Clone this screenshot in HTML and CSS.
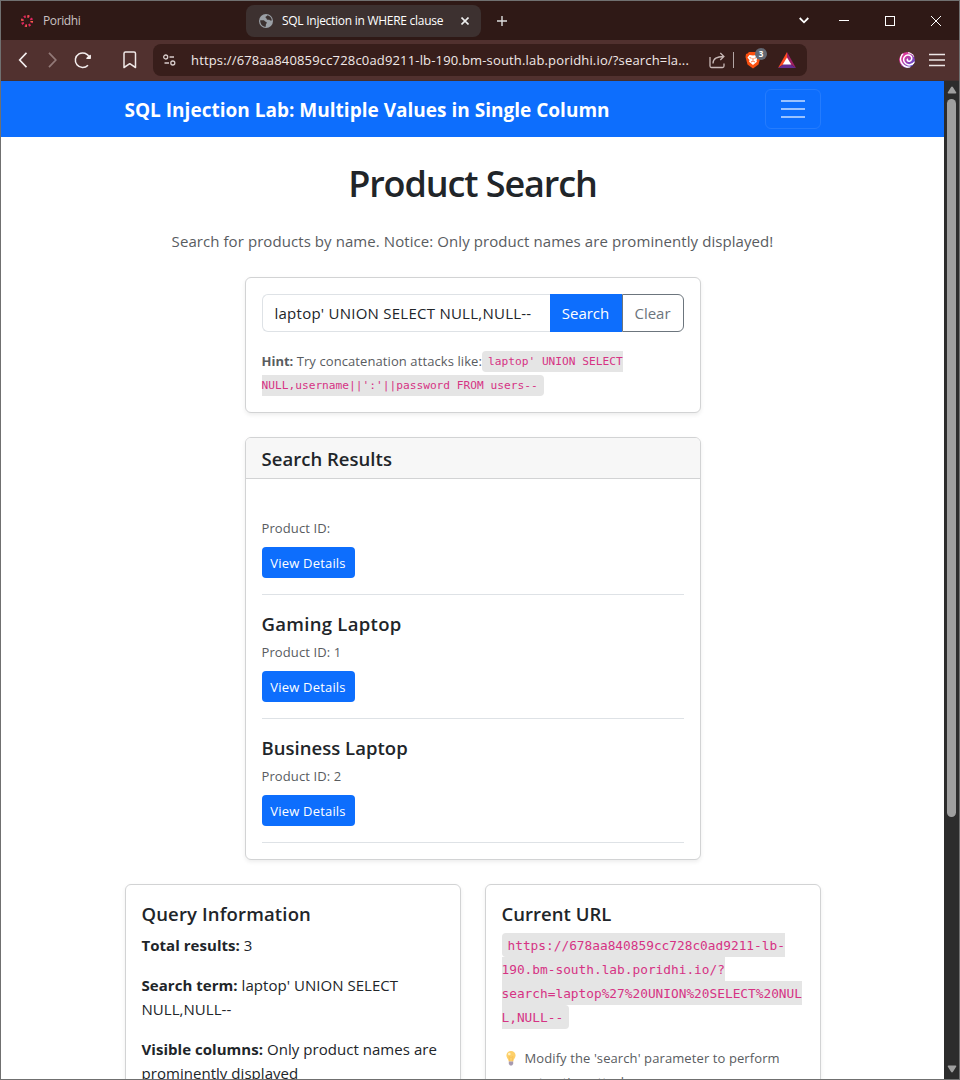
FILE: index.html
```html
<!DOCTYPE html>
<html lang="en">
<head>
<meta charset="utf-8">
<title>SQL Injection in WHERE clause</title>
<link rel="stylesheet" href="styles.css">
</head>
<body>
<div class="window">
  <div class="tabs">
    <div class="tab idle">
      <svg width="14" height="14" viewBox="0 0 14 14" fill="none" stroke-width="2.5"><circle cx="7" cy="7" r="4.800" stroke="#e0265f" stroke-dasharray="1.900 1.870"/><circle cx="7" cy="7" r="4.800" stroke="#f0703f" stroke-dasharray="1 6.540"/></svg>
      <span class="t-idle">Poridhi</span>
    </div>
    <div class="tab active">
      <svg width="14" height="14" viewBox="0 0 14 14"><circle cx="7" cy="7" r="7" fill="#9ba0a6"/><path d="M1.2 6.2h3.4c1 0 1.3 1.2 2.2 1.5s1.2.8.8 1.6-.8 1.2-.8 2.3v1.2C3.500 12.600 1 10 1.200 6.200zM8.500 1.300c-.2 1-1.700.8-2 1.700s1 .8 1 1.600 1 1.400 2 1.200 1.200.6 2 .8l1.400-.1c-.2-2.600-2-4.600-4.400-5.200z" fill="#3c3231"/></svg>
      <span class="t-active">SQL Injection in WHERE clause</span>
      <svg class="close" width="8" height="8" viewBox="0 0 8 8" stroke="#eee" stroke-width="1.6"><path d="M.5.5l7 7M7.500.5l-7 7"/></svg>
    </div>
    <svg class="plus" width="10" height="10" viewBox="0 0 10 10" stroke="#ddd" stroke-width="1.400"><path d="M5 0v10M0 5h10"/></svg>
    <div class="controls">
      <svg class="chevron" width="10" height="7" viewBox="0 0 10 7" fill="none" stroke="#fff" stroke-width="1.800"><path d="M.7 1L5 5.300 9.300 1"/></svg>
      <svg width="10" height="10" viewBox="0 0 10 10" stroke="#fff"><path d="M0 4.500h10"/></svg>
      <svg width="10" height="10" viewBox="0 0 10 10" fill="none" stroke="#fff"><rect x=".5" y=".5" width="9" height="9"/></svg>
      <svg width="10" height="10" viewBox="0 0 10 10" stroke="#fff"><path d="M0 0l10 10M10 0L0 10"/></svg>
    </div>
  </div>
  <div class="toolbar">
    <svg class="back" width="9" height="16" viewBox="0 0 9 16" fill="none" stroke="#f4eeee" stroke-width="1.700"><path d="M8.500 .8L1.700 8 8.500 15.200"/></svg>
    <svg class="fwd" width="9" height="16" viewBox="0 0 9 16" fill="none" stroke="#937a78" stroke-width="1.700"><path d="M1 .8L7.800 8 1 15.200"/></svg>
    <svg class="reload" width="18" height="18" viewBox="0 0 18 18" fill="none" stroke="#f4eeee" stroke-width="1.500"><path d="M14 14.200A7.300 7.300 0 1 1 15.400 6.500"/><path d="M13 7.300h3.200V4.500z" fill="#f4eeee" stroke-linejoin="round"/></svg>
    <svg class="mark" width="14" height="18" viewBox="0 0 14 18" fill="none" stroke="#f0e8e7" stroke-width="1.500" stroke-linejoin="round"><path d="M1 2.500Q1 1 2.500 1h8.500q1.500 0 1.500 1.500v14L6.750 12.700 1 16.500z"/></svg>
    <div class="address">
      <svg width="13" height="12" viewBox="0 0 13 12" fill="none" stroke="#d8cccb" stroke-width="1.300"><circle cx="2.700" cy="3" r="2"/><path d="M6.500 3H11M1.500 9H6"/><circle cx="9.800" cy="9" r="2"/></svg>
      <span class="url">https://678aa840859cc728c0ad9211-lb-190.bm-south.lab.poridhi.io/?search=la...</span>
      <svg class="share" width="17" height="17" viewBox="0 0 17 17" fill="none" stroke="#c9b9b7" stroke-width="1.300"><path d="M1 5v9q0 1.500 1.500 1.500h11q1.500 0 1.500-1.500v-2.500M4 11.500C4 6.500 8 4.500 14.500 4.500M11.300 1l3.600 3.500-3.600 3.500"/></svg>
      <i class="rule"></i>
      <div class="brave">
        <svg width="16" height="18" viewBox="0 0 16 18"><path d="M4 1h8l1.500 1.500L15 3l.5 3-2 7.500L8 17.500 2.500 13.500.5 6 1 3l1.500-.5z" fill="#fb5010"/><path d="M4.500 4L8 4.600 11.500 4 13.500 6.500 11.500 9l.4 1.800L8 14 4.100 10.800 4.500 9 2.500 6.500z" fill="#fff"/><path d="M4.500 6.500l2 .8M11.500 6.500l-2 .8M8 7v2.500M6 11l2-1 2 1" stroke="#fb5010" stroke-width=".8" fill="none"/></svg>
        <b class="count">3</b>
      </div>
      <svg class="bat" width="18" height="16" viewBox="0 0 18 16"><path d="M9 0L0 16l9-6z" fill="#ff4a22"/><path d="M9 0l9 16-9-6z" fill="#9e1f63"/><path d="M0 16h18l-9-6z" fill="#662d91"/><path d="M9 5.500l4.300 7H4.700z" fill="#fff"/></svg>
    </div>
    <svg class="swirl" width="16" height="16" viewBox="0 0 16 16" fill="none"><defs><linearGradient id="g" x1="0" y1="0" x2="1" y2="1"><stop offset=".3" stop-color="#d8389a"/><stop offset="1" stop-color="#3a50e0"/></linearGradient><clipPath id="c"><circle cx="8" cy="8" r="8"/></clipPath></defs><g clip-path="url(#c)"><circle cx="8" cy="8" r="8" fill="url(#g)"/><path d="M9 6.800C7.500 7.600 8.500 9.600 10.500 9.200S13.500 6 12 4.300 7 2.500 5.300 5.200s.2 7 3.700 7.600 5.500-1 7-3M4 1.500C1.500 4 .6 8 3 11.500s6 4 8.500 3.700M9 .5c3 0 5 1.500 6.500 4" stroke="#fff" stroke-width="1.500"/></g></svg>
    <svg class="menu" width="16" height="14" viewBox="0 0 16 14" stroke="#eee7e6" stroke-width="1.500"><path d="M0 1.500h16M0 7h16M0 12.500h16"/></svg>
  </div>
  <div class="view">
    <main class="page">
      <nav class="navbar">
        <span class="brand">SQL Injection Lab: Multiple Values in Single Column</span>
        <span class="toggler"><svg width="24" height="18" viewBox="0 0 24 18" stroke="#9ac2ff" stroke-width="2"><path d="M0 1h24M0 9h24M0 17h24"/></svg></span>
      </nav>
      <h1 class="title">Product Search</h1>
      <p class="lead">Search for products by name. Notice: Only product names are prominently displayed!</p>
      <section class="card search">
        <div class="group">
          <span class="field">laptop' UNION SELECT NULL,NULL--</span>
          <span class="go">Search</span>
          <span class="clear">Clear</span>
        </div>
        <p class="hint"><b>Hint:</b> <span class="try">Try concatenation attacks like:</span><code>laptop' UNION SELECT<br>NULL,username||':'||password FROM users--</code></p>
      </section>
      <section class="card results">
        <header class="head"><h2 class="h5">Search Results</h2></header>
        <div class="body">
          <article class="item"><p class="pid">Product ID:</p><span class="btn">View Details</span></article>
          <article class="item"><h3 class="h5 h-gaming">Gaming Laptop</h3><p class="pid">Product ID: 1</p><span class="btn">View Details</span></article>
          <article class="item"><h3 class="h5">Business Laptop</h3><p class="pid">Product ID: 2</p><span class="btn">View Details</span></article>
        </div>
      </section>
      <div class="columns">
        <section class="card info">
          <h2 class="h5 h-query">Query Information</h2>
          <p><b>Total results:</b> 3</p>
          <p><b>Search term:</b> laptop' UNION SELECT<br>NULL,NULL--</p>
          <p><b>Visible columns:</b> Only product names are<br>prominently displayed</p>
        </section>
        <section class="card info">
          <h2 class="h5">Current URL</h2>
          <p class="long"><code>https://678aa840859cc728c0ad9211-lb-<br>190.bm-south.lab.poridhi.io/?<br>search=laptop%27%20UNION%20SELECT%20NUL<br>L,NULL--</code></p>
          <p class="tip"><svg width="10" height="15" viewBox="0 0 10 15"><path d="M5 0a4.600 4.600 0 0 1 4.600 4.600C9.600 7 7.500 8 7.300 10.500H2.700C2.500 8 .4 7 .4 4.600A4.600 4.600 0 0 1 5 0z" fill="#fdd06a"/><path d="M3.800 10.500L3 5.500l2 1 2-1-.8 5" fill="none" stroke="#f8bd55" stroke-width=".7"/><circle cx="3.300" cy="3" r="1.300" fill="#fff2c4"/><path d="M2.800 10.500h4.400v2.500L6 14.500H4L2.800 13z" fill="#a79ab0"/></svg><span>Modify the 'search' parameter to perform<br>extraction attacks.</span></p>
        </section>
      </div>
    </main>
    <div class="scroll">
      <svg width="10" height="8" viewBox="0 0 10 8"><path d="M5 .5Q5.500.5 6 1.300L9.300 6.500Q9.500 7.500 8.500 7.500h-7Q.5 7.500.7 6.500L4 1.300Q4.500.5 5 .5z" fill="#9f9f9f"/></svg>
      <i class="thumb"></i>
      <svg class="down" width="10" height="8" viewBox="0 0 10 8"><path d="M5 7.500Q5.500 7.500 6 6.700L9.300 1.500Q9.500.5 8.500.5h-7Q.5.5.7 1.500L4 6.700Q4.500 7.500 5 7.500z" fill="#9f9f9f"/></svg>
    </div>
  </div>
</div>
</body>
</html>
```
FILE: styles.css
```css
* { box-sizing: border-box; }
body { margin: 0; font: 15px/24px "Open Sans", "Noto Sans", sans-serif; color: #212529; }
h1, h2, h3, p { margin: 0; }
svg { display: block; flex: none; }
.window { width: 960px; height: 1080px; border: 1px solid #707070; display: flex; flex-direction: column; overflow: hidden; white-space: nowrap; background: #fff; }

.tabs { height: 39px; flex: none; display: flex; align-items: center; background: #2f1916; color: #fff; font-size: 12px; line-height: 16px; }
.tab { display: flex; align-items: center; }
.idle { width: 245px; padding-left: 19px; gap: 9px; color: #cbc3c2; }
.t-idle { letter-spacing: -.4px; }
.active { width: 235px; height: 32px; padding-left: 13px; gap: 9px; border-radius: 8px; background: #3d3130; }
.t-active { letter-spacing: -.27px; }
.close { margin-left: auto; margin-right: 12px; }
.plus { margin-left: 16px; }
.controls { margin-left: auto; display: flex; align-items: center; gap: 36px; padding-right: 18px; }
.chevron { margin-right: -6px; }

.toolbar { height: 41px; flex: none; display: flex; align-items: center; background: #51312f; border-bottom: 1px solid #44302f; }
.back { margin-left: 17px; }
.fwd { margin-left: 21px; }
.reload { margin-left: 17px; }
.mark { margin-left: 31px; }
.address { width: 654px; height: 32px; margin-left: 16px; padding-left: 10px; display: flex; align-items: center; border-radius: 8px; background: #381e1b; }
.url { width: 500px; margin-left: 15px; font-size: 13px; letter-spacing: .165px; color: #f1e9e8; }
.share { margin-left: 18px; }
.rule { width: 1px; height: 16px; margin-left: 7px; background: #b3a5a4; }
.brave { position: relative; margin-left: 11px; }
.count { position: absolute; left: 10px; top: -3px; width: 12px; height: 12px; border-radius: 6px; background: #636873; color: #fff; font-size: 8px; line-height: 12px; text-align: center; }
.bat { margin-left: 17px; }
.swirl { margin-left: 92px; }
.menu { margin-left: 14px; }

.view { flex: 1; min-height: 0; display: flex; }
.page { width: 943px; overflow: hidden; display: flex; flex-direction: column; align-items: center; }
.navbar { align-self: stretch; height: 56px; flex: none; padding: 0 123.500px; display: flex; justify-content: space-between; align-items: center; background: #0d6efd; }
.brand { font-size: 19px; font-weight: 700; letter-spacing: .01px; color: #fff; padding-top: 1px; }
.toggler { width: 56px; height: 40px; display: flex; align-items: center; justify-content: center; border: 1px solid #257cfd; border-radius: 6px; }
.title { margin-top: 23px; font-size: 36px; line-height: 48px; font-weight: 600; letter-spacing: -1.100px; }
.lead { margin-top: 21px; letter-spacing: .075px; color: #595c5f; }
.card { border: 1px solid #d2d3d4; border-radius: 6px; background: #fff; box-shadow: 0 2px 4px rgba(0,0,0,.075); flex: none; }
.search { width: 456px; height: 136px; margin-top: 24px; padding: 16px; }
.group { display: flex; height: 38px; line-height: 36px; }
.field { flex: 1; border: 1px solid #dee2e6; border-right: 0; border-radius: 6px 0 0 6px; padding-left: 12px; letter-spacing: .25px; }
.go { width: 72px; text-align: center; line-height: 38px; background: #0d6efd; color: #fff; }
.clear { width: 62px; border: 1px solid #6c757d; border-radius: 0 6px 6px 0; text-align: center; color: #6c757d; }
.hint { margin-top: 17px; font-size: 13px; color: #595c5f; }
.try { letter-spacing: .09px; }
code { font-family: "DejaVu Sans Mono", monospace; line-height: 1; vertical-align: 1px; color: #d63384; background: #e5e5e5; border-radius: 4px; }
.hint code { font-size: 11.200px; padding: 4px 6px; }

.results { width: 456px; margin-top: 24px; }
.head { height: 41px; padding: 9px 16px 7px; border-bottom: 1px solid #d2d3d4; border-radius: 5px 5px 0 0; background: #f7f7f7; }
.h5 { font-size: 18.500px; line-height: 24px; font-weight: 600; letter-spacing: .03px; }
.h-gaming { letter-spacing: .3px; }
.h-query { letter-spacing: .15px; }
.body { padding: 16px; }
.item { padding: 16px 0; border-bottom: 1px solid #dee2e6; display: flex; flex-direction: column; align-items: flex-start; }
.item .h5 { padding-top: 1px; margin-bottom: -1px; }
.pid { margin: 5px 0 7px; font-size: 13px; letter-spacing: .1px; color: #595c5f; }
.btn { width: 93px; height: 31px; border-radius: 4px; background: #0d6efd; color: #fff; font-size: 13px; line-height: 32px; letter-spacing: .2px; text-align: center; }

.columns { display: grid; grid-template-columns: 336px 336px; gap: 24px; margin-top: 24px; flex: none; }
.info { height: 260px; padding: 17px 16px 16px; }
.info p { margin-top: 16px; letter-spacing: .04px; }
.info h2 + p { margin-top: 7px; }
.info .long { letter-spacing: 0; }
.long code { font-size: 12.800px; padding: 5px 6px 4px; }
.info .tip { display: flex; gap: 9px; padding: 4px 0 0 4px; margin-top: 14px; font-size: 13px; letter-spacing: .1px; color: #595c5f; }
.tip span { margin-top: -1px; }
.tip svg { margin-top: 4px; }

.scroll { width: 15px; padding: 5px 0 6px; display: flex; flex-direction: column; align-items: center; background: #2c2c2c; }
.thumb { width: 9px; height: 718px; margin-top: 5px; border-radius: 5px; background: #9f9f9f; }
.down { margin-top: auto; }
```
